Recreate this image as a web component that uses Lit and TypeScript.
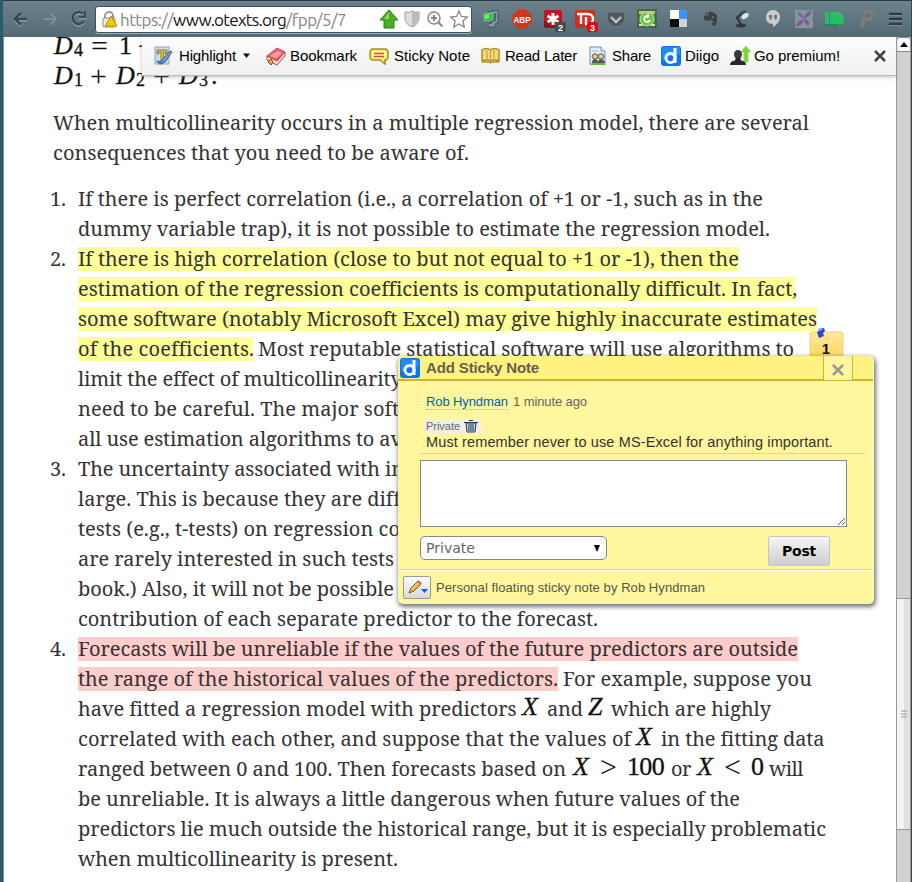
import { LitElement, html, css, svg, nothing } from "lit";
import { customElement, property } from "lit/decorators.js";

/** One run of text spread over a given measure. */
@customElement("fit-text")
class FitText extends LitElement {
  @property({ type: Number }) width = 0;
  @property() text = "";
  static styles = css`
    :host { display: inline-block; white-space: pre; flex: none; }
  `;
  updated() {
    this.style.width = "auto";
    this.style.letterSpacing = "0px";
    const natural = this.getBoundingClientRect().width;
    const n = Math.max(1, this.text.length);
    this.style.letterSpacing = (this.width - natural) / n + "px";
    this.style.width = this.width + "px";
  }
  render() { return html`${this.text}`; }
}

type Seg = [text: string, start: number, end: number, kind?: string];
type Item = { n: string; lines: Seg[][] };

const intro: Seg[][] = [
  [["When multicollinearity occurs in a multiple regression model, there are several", 53, 809]],
  [["consequences that you need to be aware of.", 53, 469]],
];

const items: Item[] = [
  { n: "1.", lines: [
    [["If there is perfect correlation (i.e., a correlation of +1 or -1, such as in the", 78, 763]],
    [["dummy variable trap), it is not possible to estimate the regression model.", 78, 770]],
  ] },
  { n: "2.", lines: [
    [["If there is high correlation (close to but not equal to +1 or -1), then the", 78, 739, "yellow"]],
    [["estimation of the regression coefficients is computationally difficult. In fact,", 78, 795, "yellow"]],
    [["some software (notably Microsoft Excel) may give highly inaccurate estimates", 78, 817, "yellow"]],
    [["of the coefficients.", 78, 253, "yellow"], ["Most reputable statistical software will use algorithms to", 258, 794]],
    [["limit the effect of multicollinearity", 78, 401]],
    [["need to be careful. The major soft", 78, 399]],
    [["all use estimation algorithms to av", 78, 402]],
  ] },
  { n: "3.", lines: [
    [["The uncertainty associated with in", 78, 404]],
    [["large. This is because they are diff", 78, 400]],
    [["tests (e.g., t-tests) on regression co", 78, 400]],
    [["are rarely interested in such tests", 78, 394]],
    [["book.) Also, it will not be possible", 78, 394]],
    [["contribution of each separate predictor to the forecast.", 78, 598]],
  ] },
  { n: "4.", lines: [
    [["Forecasts will be unreliable if the values of the future predictors are outside", 78, 798, "pink"]],
    [["the range of the historical values of the predictors.", 78, 558, "pink"], ["For example, suppose you", 563, 812]],
    [["have fitted a regression model with predictors", 78, 516], ["X", 522, 541, "mi"], ["and", 547, 583], ["Z", 588, 604, "mi"], ["which are highly", 611, 771]],
    [["correlated with each other, and suppose that the values of", 78, 631], ["X", 636, 655, "mi"], ["in the fitting data", 661, 824]],
    [["ranged between 0 and 100. Then forecasts based on", 78, 566], ["X", 573, 591, "mi"], [">", 600, 616, "mo"], ["100", 627, 664, "mn"], ["or", 671, 691], ["X", 697, 715, "mi"], ["<", 724, 741, "mo"], ["0", 751, 763, "mn"], ["will", 769, 803]],
    [["be unreliable. It is always a little dangerous when future values of the", 78, 740]],
    [["predictors lie much outside the historical range, but it is especially problematic", 78, 826]],
    [["when multicollinearity is present.", 78, 398]],
  ] },
];

const math: Seg[][] = [
  [["D", 54, 72, "mi"], ["4", 74, 83, "sub"], ["=", 91, 109, "mo"], ["1", 119, 131, "mn"], ["−", 138, 154, "mo"]],
  [["D", 54, 72, "mi"], ["1", 74, 82, "sub"], ["+", 90, 108, "mo"], ["D", 116, 134, "mi"], ["2", 136, 145, "sub"], ["+", 153, 171, "mo"], ["D", 179, 197, "mi"], ["3", 199, 208, "sub"], [".", 211, 217, "mn"]],
];

const line = (segs: Seg[], left: number) => {
  let x = left;
  return html`<div class="line">${segs.map(([t, a, b, k]) => {
    const gap = a - x;
    x = b;
    return html`<fit-text class=${k ?? "plain"} style="margin-left:${gap}px" .width=${b - a} .text=${t}></fit-text>`;
  })}</div>`;
};

const icon = (w: number, h: number, body: unknown, cls = "") =>
  html`<svg class=${cls} width=${w} height=${h} viewBox="0 0 ${w} ${h}">${body}</svg>`;

const diigo = svg`<rect x="0" y="0" width="20" height="20" rx="3" fill="#0a74f5"/><path d="M1 3Q1 1 3 1H17Q19 1 19 3V9Q10 8 1 14Z" fill="#2ba0ff" opacity=".6"/><circle cx="9.500" cy="12" r="4.600" fill="none" stroke="#fff" stroke-width="3"/><path d="M14 2v15" stroke="#fff" stroke-width="3"/>`;

const extensions = [
  icon(20, 20, svg`<path d="M7 3l10-2v13l-3 1v3h-7v-3l4-1z" fill="#819aa4" stroke="#435861"/><path d="M12 5l3-1v8l-4 1z" fill="#4b626c"/><path d="M3 5l9-1v7l-9 1z" fill="#26c92e" stroke="#8fb59d"/><path d="M4 6l4-1v4l-4 1z" fill="#78ef75"/>`),
  icon(20, 20, svg`<path d="M6 .500h8l5.500 5.500v8l-5.500 5.500H6L.500 14V6z" fill="#d43518"/><text x="10" y="13.500" text-anchor="middle" textLength="17" lengthAdjust="spacingAndGlyphs" class="abp">ABP</text>`),
  icon(24, 24, svg`<rect x="1" y="1" width="18" height="18" rx="2" fill="#c91420"/><path d="M1 12h18v5q0 2-2 2H3q-2 0-2-2z" fill="#93101b"/><path d="M10 4v12M4.500 7l11 6M15.500 7l-11 6" stroke="#fff" stroke-width="3"/><rect x="12" y="13" width="11" height="10" rx="2" fill="#4a4a4a"/><text x="17.500" y="21.500" text-anchor="middle" class="badge">2</text>`, "badged"),
  icon(24, 24, svg`<rect x="1" y="1" width="20" height="18" rx="2" fill="#d7291f"/><path d="M3 5h9M7 5v10M12 15V8M12 5h2a5 5 0 010 10h-3" fill="none" stroke="#fff" stroke-width="2.400"/><rect x="13" y="13" width="11" height="10" rx="2" fill="#db0c16"/><text x="18.500" y="21.500" text-anchor="middle" class="badge">3</text>`, "badged"),
  icon(20, 20, svg`<path d="M1 3h18v6a9 9 0 01-18 0z" fill="#50565a" stroke="#757f83"/><path d="M5 8l5 5 5-5" fill="none" stroke="#b5c9d1" stroke-width="2.400"/>`),
  icon(20, 20, svg`<rect x="1" y="1" width="18" height="17" fill="#557a3e" stroke="#3b4f37"/><path d="M2 2h16v3H2z" fill="#b7cd7b"/><path d="M2 16h4M14 16h4" stroke="#d9e2b3" stroke-width="2"/><circle cx="10" cy="10" r="7" fill="#6bc84b" stroke="#c0e8a8"/><path d="M13 11a3 3 0 11-2-4M11 4.500V8H8" fill="none" stroke="#fff" stroke-width="1.700"/>`),
  icon(20, 20, svg`<rect x="1" y="1" width="9" height="9" fill="#fff"/><rect x="10" y="1" width="8" height="9" fill="#3399ff"/><rect x="1" y="10" width="9" height="8" fill="#0b0b0b"/><rect x="10" y="10" width="8" height="8" fill="#d2d2d2"/>`),
  icon(20, 20, svg`<path d="M4 6l4-4 4 1 4 2c2 3 1 8 0 11l-3 1-1-3 2-1-3-2-4 1-3-2z" fill="#3e4143"/><path d="M4 6h4V2" fill="none" stroke="#7b8284"/><path d="M12 8l2 .5" stroke="#999"/>`),
  icon(20, 20, svg`<path d="M11 4L6 9l4 6" fill="none" stroke="#303436" stroke-width="2.200"/><path d="M9 3l5-2 3 4-5 4z" fill="#494f51"/><ellipse cx="14" cy="7" rx="4" ry="2.500" transform="rotate(-35 14 7)" fill="#dfe3e4"/><ellipse cx="10" cy="16.500" rx="5" ry="2" fill="#343739"/>`),
  icon(20, 20, svg`<path d="M10 1a7 7 0 017 7c0 5-4 8-7 10v-3C5 15 3 12 3 8a7 7 0 017-7z" fill="#cbcccb"/><path d="M6 6h3v3l-1 2H6.500l1-2H6zM11 6h3v3l-1 2h-1.500l1-2H11z" fill="#6f7779"/>`),
  icon(20, 20, svg`<rect x="1" y="1" width="18" height="18" fill="#87949e"/><path d="M10 10C6 8 3 5 4 3c2 0 5 3 6 7 0-4 3-8 7-8 1 3-3 6-7 8 4 0 6 4 5 6-3 1-5-2-5-6-1 4-4 8-8 7 0-3 4-6 8-7z" fill="#755d96"/>`),
  icon(20, 20, svg`<path d="M0 3h4v14H0zM5 3h7q7 1 7 7t-7 7H5z" fill="#29bd66"/><path d="M0 15h4v2H0zM5 15h10l-3 2H5z" fill="#15924a"/>`),
  icon(20, 20, svg`<path d="M7 1h7q4 1 3 5-1 6-7 6H8l-1 6H3z" fill="#7c7b79"/><path d="M9.500 4.500h2.500q2 0 1 2-1 2-3 2h-1.500z" fill="#5e7076"/>`),
];

const pen = svg`<rect x="1" y="1" width="14" height="17" fill="#c8dcf6" stroke="#8ba5cb"/><path d="M3 4h10v4h-1.500V6h-2v9H11v1H5.500v-1H7V6H4.500v2H3z" fill="#f1cb14" stroke="#5d5326" stroke-width=".7"/><path d="M16 5l2 1-7 10-4 2 1-4z" fill="#68a0dc" stroke="#365c95"/><path d="M3 15l4 3" stroke="#3474bd" stroke-width="2"/>`;
const book = svg`<path d="M1 10L11 2l8 4-8 9z" fill="#ee6070" stroke="#cb4b52"/><path d="M1 10l10 5 8-9v4l-8 9-10-5z" fill="#f8d9d7" stroke="#bd4444"/><path d="M4 10l8-5 4 2-6 5z" fill="#f7a2a6"/><path d="M2 16l3-3 2 3-2 3z" fill="#e6b33b" stroke="#7d4b1e"/>`;
const bubble = svg`<path d="M4 3h12q3 0 3 4v3q0 4-3 4v4l-5-4H4q-3 0-3-4V7q0-4 3-4z" fill="#fbec51" stroke="#9e8d33" stroke-width="1.500"/><path d="M6 5h9q2 0 2 2.500V9q0 3-3 3H6q-3 0-3-3V7.500Q3 5 6 5z" fill="#fff6a1"/><path d="M5 7.500h10M5 10.500h10" stroke="#c44e50" stroke-width="1.300"/>`;
const open = svg`<path d="M1 4q5-3 8.500 0 3.500-3 8.500 0v11q-5-2-8.500 0-3.500-2-8.500 0z" fill="#f5d878" stroke="#b38b2b" stroke-width="1.500"/><path d="M9.500 4v11M6 4v10M13 4v10" stroke="#c79c3a"/><path d="M1 16h7l1.500 1 1.500-1h7" fill="none" stroke="#b38b2b" stroke-width="1.300"/>`;
const share = svg`<path d="M1 1h11l4 4v13H1z" fill="#e3efff" stroke="#6f8db8"/><path d="M12 1v4h4" fill="#fff" stroke="#6f8db8"/><path d="M3 5h7" stroke="#9bb9e1"/><path d="M1 19l3-3h10l3 3z" fill="#62bc3a"/><path d="M3 17q0-4 3-4t3 4M9 17q0-4 3-4t4 4" fill="#555"/><circle cx="6" cy="10.500" r="2.700" fill="#e9cf83" stroke="#55504a"/><circle cx="12" cy="10.500" r="2.700" fill="#e9cf83" stroke="#55504a"/>`;
const premium = svg`<path d="M14 17V7h-3l5-6 5 6h-3v10z" fill="#78d522" stroke="#a0d880"/><ellipse cx="8" cy="9.500" rx="4" ry="4.500" fill="#3a3a3a"/><path d="M0 20q0-4 5-4.500l1-3h4l1 3q5 .500 5 4.500z" fill="#292929"/>`;

@customElement("app-root")
class AppRoot extends LitElement {
  static styles = css`
    :host { display: block; width: 912px; height: 882px; overflow: hidden; position: relative; background: #fff; font-family: "Liberation Sans", Arial, sans-serif; }
    * { box-sizing: border-box; }
    svg { display: block; flex: none; overflow: visible; }
    .window { height: 882px; display: flex; flex-direction: column; border-left: 3px solid #2e5b6c; border-right: 1px solid #294953; }
    .chrome { height: 37px; flex: none; background: linear-gradient(#6d828b, #536a75); border-top: 1px solid #243d49; display: flex; align-items: center; padding: 0 8px 0 9px; }
    .nav { display: flex; gap: 12px; width: 83px; }
    .address { width: 377px; height: 27px; border: 1px solid #3b515c; box-shadow: 0 1px #9badb5; border-radius: 3px; background: #fff; display: flex; align-items: center; padding-left: 6px; }
    .lock { margin-right: 3px; }
    .url { font: 17px/25px "Ubuntu", "Noto Sans", sans-serif; color: #858585; display: flex; width: 259px; }
    .host { color: #111; }
    .marks { display: flex; gap: 4px; align-items: center; }
    .extensions { display: flex; flex: 1; margin-left: 9px; align-items: center; justify-content: space-between; }
    .badged { margin: 4px -3px 0 -1px; }
    .badge { font: bold 9px "Liberation Sans", sans-serif; fill: #fff; }
    .abp { font: bold 9.500px "Liberation Sans", sans-serif; fill: #fff; }
    .view { flex: 1; display: flex; min-height: 0; border-left: 1px solid #7a9097; }
    .page { width: 892px; overflow: hidden; background: #fff; }
    .article { margin: -4px 0 0 49px; color: #333; font: 20px/30px "Droid Serif", "Noto Serif", "DejaVu Serif Condensed", "DejaVu Serif", serif; }
    .line { height: 30px; display: flex; align-items: center; white-space: nowrap; }
    .plain, .yellow, .pink { height: 24px; line-height: 24px; }
    .yellow { background: #ffff99; }
    .pink { background: #ffcccc; }
    .mi, .mn, .mo, .sub { color: #111; font: 26px/26px "Liberation Serif", serif; height: 30px; }
    .mi { font-style: italic; -webkit-text-stroke: .3px #111; }
    .mn { -webkit-text-stroke: .3px #111; }
    .mo { font-size: 30px; }
    .sub { font-size: 18px; padding-top: 6px; height: 34px; -webkit-text-stroke: .3px #111; }
    .intro { margin: 15px 0 16px; }
    .item { display: grid; grid-template-columns: 25px 1fr; }
    .num { margin-left: -3px; }
    .bar { position: absolute; left: 142px; top: 37px; width: 754px; height: 39px; background: linear-gradient(#fefefe, #efefed); border-bottom: 1px solid #bbb; box-shadow: 0 1px 4px #8888; display: flex; align-items: center; padding: 0 9px 1px 12px; font-size: 15px; color: #000; }
    .tool { display: flex; align-items: center; flex: none; }
    .tool svg { margin-right: 4px; }
    .scroll { flex: 1; border-left: 1px solid #999; border-right: 1px solid #999; background: #d2d2d2; display: flex; flex-direction: column; }
    .up { height: 15px; border: 1px solid #888; border-width: 1px 0; border-radius: 3px 3px 0 0; background: #fafafa; display: flex; align-items: center; justify-content: center; }
    .track { height: 546px; }
    .thumb { height: 232px; background: linear-gradient(90deg, #f3f3f3 50%, #e1e1e1 50%); border: 1px solid #999; border-width: 1px 0; display: flex; align-items: center; justify-content: center; }
    .pin { position: absolute; left: 808px; top: 326px; }
    .count { font: bold 15px "Liberation Sans", sans-serif; fill: #111; }
    .note { position: absolute; left: 398px; top: 356px; width: 476px; height: 248px; background: #fff69d; border-radius: 5px; border-right: 1px solid #fffbc5; box-shadow: 1px 2px 4px 1px #555c; display: flex; flex-direction: column; color: #333; }
    .head { height: 25px; flex: none; display: flex; align-items: center; background: #fff281; border-bottom: 2px solid #cbb62f; border-radius: 5px 5px 0 0; padding-left: 2px; color: #665f4e; font-weight: bold; font-size: 15px; }
    .title { width: 403px; padding-left: 6px; }
    .close { width: 30px; height: 24px; border: 1px solid #cbb62f; border-width: 0 1px; background: #fff69d; display: flex; align-items: center; justify-content: center; padding-top: 3px; margin-top: 1px; }
    .content { padding: 13px 8px 0 22px; height: 189px; border-bottom: 1px solid #ddd5aa; }
    .meta { display: flex; font-size: 13px; line-height: 15px; padding-left: 6px; gap: 5px; color: #666; }
    .author { color: #0061b5; border-bottom: 1px dotted #aaa; }
    .tag { display: flex; align-items: center; gap: 4px; width: 57px; height: 14px; background: #f0eee7; margin: 9px 0 0 4px; padding-left: 2px; font-size: 11px; line-height: 14px; color: #666; }
    .message { font-size: 14.500px; line-height: 18px; height: 21px; padding-left: 6px; border-bottom: 1px solid #ded69d; }
    .entry { width: 427px; height: 67px; border: 1px solid #888; background: #fff; margin-top: 6px; display: flex; justify-content: flex-end; align-items: flex-end; }
    .actions { display: flex; justify-content: space-between; align-items: flex-start; width: 410px; margin-top: 9px; }
    .select { width: 187px; height: 24px; background: #fff; border: 1px solid #888; border-radius: 5px; display: flex; align-items: center; justify-content: space-between; padding: 0 5px; font: 14px "DejaVu Sans", sans-serif; color: #666; }
    .post { width: 62px; height: 30px; border: 1px solid #c5c5c5; border-radius: 2px; background: linear-gradient(#f5f5f5, #cecece); display: flex; align-items: center; justify-content: center; color: #000; font: bold 14px "DejaVu Sans", sans-serif; }
    .foot { flex: 1; border-top: 1px solid #fffef5; display: flex; align-items: center; padding: 0 5px 0; gap: 5px; font-size: 13px; color: #555; }
    .edit { width: 28px; height: 23px; border: 1px solid #999; border-radius: 2px; background: linear-gradient(#fdfdfd, #d9d9d9); display: flex; align-items: center; justify-content: center; }
  `;

  tool(width: number, height: number, art: unknown, text: string, textWidth: number, gap: number, end: unknown = nothing) {
    return html`<div class="tool" style="margin-right:${gap}px">${icon(width, height, art)}<fit-text .width=${textWidth} .text=${text}></fit-text>${end}</div>`;
  }

  render() {
    return html`
      <div class="window">
        <div class="chrome">
          <div class="nav">
            ${icon(17, 18, svg`<path d="M15 10H3M9 4l-6 6 6 6" fill="none" stroke="#a9b5ba" stroke-width="2.500"/><path d="M15 9H3M9 3L3 9l6 6" fill="none" stroke="#39464b" stroke-width="2.500"/>`)}
            ${icon(17, 18, svg`<path d="M2 9h12M9 3l6 6-6 6" fill="none" stroke="#83949b" stroke-width="1.500"/>`)}
            ${icon(17, 18, svg`<path d="M14 12a6 6 0 11-1-7M15 2v6H9" fill="none" stroke="#a9b5ba" stroke-width="2.500"/><path d="M14 11a6 6 0 11-1-7M15 1v6H9" fill="none" stroke="#404a4e" stroke-width="2.500"/>`)}
          </div>
          <div class="address">
            ${icon(15, 17, svg`<path d="M3 8V5a4 4 0 018 0v3" fill="none" stroke="#999" stroke-width="2"/><rect x="1" y="7" width="12" height="9" rx="1" fill="#eee" stroke="#888"/><path d="M9 5l6 10H3z" fill="#f9c900" stroke="#b88a00"/>`, "lock")}
            <div class="url"><fit-text .width=${53} .text=${"https://"}></fit-text><fit-text class="host" .width=${113} .text=${"www.otexts.org"}></fit-text><fit-text .width=${60} .text=${"/fpp/5/7"}></fit-text></div>
            <div class="marks">
              ${icon(20, 20, svg`<path d="M10 1l9 10h-4v8H5v-8H1z" fill="#4aae22" stroke="#278015"/><path d="M10 3v7H5z" fill="#91db5f"/>`)}
              ${icon(18, 20, svg`<path d="M3 3q4 1 6-1 3 2 7 1v6q0 6-7 9-7-3-7-9V3z" fill="#ddd" stroke="#999"/><path d="M9 3v14q6-3 6-8V4z" fill="#bbb"/>`)}
              ${icon(20, 20, svg`<circle cx="9" cy="9" r="6" fill="none" stroke="#888" stroke-width="1.500"/><path d="M13.500 13.500l4 4M6 9h6M9 6v6" stroke="#888" stroke-width="2"/>`)}
              ${icon(20, 20, svg`<path d="M10 2l2.400 5.500 6 .6-4.500 4L15.200 18 10 15l-5.200 3 1.300-5.900-4.500-4 6-.6z" fill="#fff" stroke="#888" stroke-width="1.300"/>`)}
            </div>
          </div>
          <div class="extensions">
            ${extensions}
            ${icon(15, 18, svg`<path d="M1 5h13M1 10h13M1 15h13" stroke="#98a5aa" stroke-width="2"/><path d="M1 4h13M1 9h13M1 14h13" stroke="#2f383c" stroke-width="2.400"/>`)}
          </div>
        </div>
        <div class="view">
          <div class="page">
            <div class="article">
              ${math.map((l) => line(l, 53))}
              <div class="intro">${intro.map((l) => line(l, 53))}</div>
              ${items.map((it) => html`<div class="item"><div class="num"><fit-text .width=${16} .text=${it.n}></fit-text></div><div>${it.lines.map((l) => line(l, 78))}</div></div>`)}
            </div>
          </div>
          <div class="scroll">
            <div class="up">${icon(8, 5, svg`<path d="M0 5l4-5 4 5z" fill="#000"/>`)}</div>
            <div class="track"></div>
            <div class="thumb">${icon(6, 8, svg`<path d="M0 1h6M0 4h6M0 7h6" stroke="#999"/>`)}</div>
          </div>
        </div>
      </div>

      <div class="bar">
        ${this.tool(21, 20, pen, "Highlight", 57, 12, icon(14, 8, svg`<path d="M7 1.500h7l-3.500 4.500z" fill="#111"/>`))}
        ${this.tool(20, 20, book, "Bookmark", 67, 12)}
        ${this.tool(21, 20, bubble, "Sticky Note", 76, 11)}
        ${this.tool(20, 19, open, "Read Later", 72, 12)}
        ${this.tool(19, 20, share, "Share", 39, 10)}
        ${this.tool(20, 20, diigo, "Diigo", 34, 11)}
        ${this.tool(20, 21, premium, "Go premium!", 86, 34)}
        ${icon(12, 12, svg`<path d="M1 1l10 10M11 1L1 11" stroke="#444" stroke-width="2.500"/>`)}
      </div>

      ${icon(36, 31, svg`<defs><linearGradient id="g" x2="0" y2="1"><stop stop-color="#ffe7a0"/><stop offset="1" stop-color="#fdd65b"/></linearGradient></defs><rect x="2" y="6" width="33" height="26" rx="2" fill="url(#g)" stroke="#efcf83"/><path d="M10 3l6-1 1 3-2 2 1 3-5 2-1-3-1-3 2-1z" fill="#244ac5"/><path d="M11 4l3-1" stroke="#8eabff" stroke-width="2"/><text x="18" y="28" text-anchor="middle" class="count">1</text>`, "pin")}

      <div class="note">
        <div class="head">
          ${icon(20, 20, diigo)}
          <div class="title"><fit-text .width=${113} .text=${"Add Sticky Note"}></fit-text></div>
          <div class="close">${icon(12, 12, svg`<path d="M1 1l10 10M11 1L1 11" stroke="#999" stroke-width="2.500"/>`)}</div>
        </div>
        <div class="content">
          <div class="meta"><fit-text class="author" .width=${82} .text=${"Rob Hyndman"}></fit-text><fit-text .width=${74} .text=${"1 minute ago"}></fit-text></div>
          <div class="tag"><fit-text .width=${34} .text=${"Private"}></fit-text>${icon(14, 14, svg`<path d="M2 4h10l-1 9H3z" fill="#bed3e3" stroke="#263e55"/><path d="M0 3.500h14M5 1.500h4M5 5v7M7 5v7M9 5v7" stroke="#263e55" stroke-width="1"/>`)}</div>
          <div class="message"><fit-text .width=${407} .text=${"Must remember never to use MS-Excel for anything important."}></fit-text></div>
          <div class="entry">${icon(9, 9, svg`<path d="M1 8l7-7M5 8l3-3" stroke="#666"/>`)}</div>
          <div class="actions">
            <div class="select"><fit-text .width=${49} .text=${"Private"}></fit-text>${icon(8, 7, svg`<path d="M1 0h6L4 7z" fill="#000"/>`)}</div>
            <div class="post"><fit-text .width=${34} .text=${"Post"}></fit-text></div>
          </div>
        </div>
        <div class="foot">
          <div class="edit">${icon(21, 16, svg`<path d="M2 13l2-5 7-7 3 3-7 7z" fill="#f0b24b" stroke="#7b552b"/><path d="M4 10l7-7" stroke="#ffdc9a"/><path d="M11 1l3 3" stroke="#c66" stroke-width="2"/><path d="M14 9h7l-3.500 4z" fill="#1558e4"/>`)}</div>
          <fit-text .width=${269} .text=${"Personal floating sticky note by Rob Hyndman"}></fit-text>
        </div>
      </div>
    `;
  }
}
